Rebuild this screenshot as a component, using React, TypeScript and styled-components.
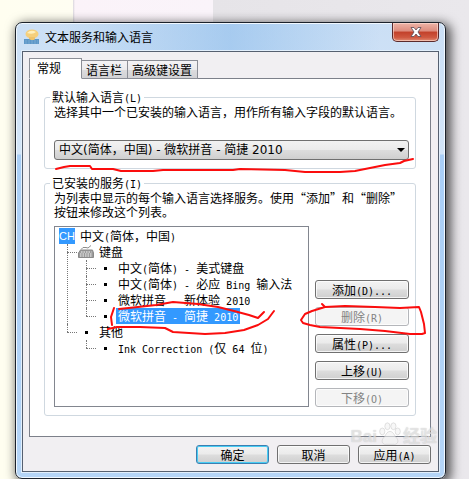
import React from "react";
import styled, { createGlobalStyle, css } from "styled-components";

const GlobalStyle = createGlobalStyle`
  * { box-sizing: border-box; }
  body {
    margin: 0;
    font: 12px/14px "Noto Sans CJK SC", sans-serif;
    color: #000;
  }
  button, select { font: inherit; color: inherit; margin: 0; }
`;

const Desktop = styled.div`
  position: relative;
  overflow: hidden;
  min-height: 100vh;
  padding: 22px 23px 0 15px;
  background: linear-gradient(90deg, #fffef0 0, #fffef2 73px, #d9d6dc 73px, #fbf3f9 75px, #faf4fa 213px, #e6e4e8 213px, #eae8ec 100%);
`;

const Dialog = styled.main`
  border: 1px solid #1c222b;
  border-radius: 7px;
  padding: 0 6px 6px;
  background:
    linear-gradient(90deg, transparent 0 10%, rgba(122, 178, 232, 0.45) 50%, transparent 85%) 0 0 / 100% 29px no-repeat,
    linear-gradient(#cbdff5 0, #d3e5f8 131px, #a9cef6 132px, #b5d5f7 100%);
  box-shadow: inset 0 0 0 1px #f1f8ff, 3px 3px 11px 2px rgba(0, 0, 0, 0.65);
`;

const TitleBar = styled.header`
  display: flex;
  align-items: flex-start;
  height: 28px;
`;

const Title = styled.h1`
  display: flex;
  align-items: center;
  gap: 5px;
  flex: 1;
  height: 28px;
  margin: 0;
  padding-left: 2px;
  font-size: 12px;
  font-weight: 400;
`;

const CloseButton = styled.button`
  display: grid;
  place-items: center;
  width: 47px;
  height: 19px;
  padding: 0;
  border: 1px solid #5a2a2c;
  border-top: 0;
  border-radius: 0 0 5px 5px;
  background: linear-gradient(#eeb4a8 0, #dd8b7c 45%, #c2402a 50%, #cf5840 80%, #e08c74 100%);
  box-shadow: inset 0 0 0 1px rgba(255, 225, 215, 0.6);
`;

const Client = styled.div`
  border: 1px solid #566070;
  padding: 6px 7px 7px 6px;
  background: #f1eff2;
  box-shadow: 0 0 0 1px #e2effc;
`;

const TabList = styled.div`
  display: flex;
  align-items: flex-end;
  position: relative;
  height: 21px;
  margin-bottom: -1px;
`;

const Tab = styled.button<{ $active?: boolean }>`
  height: 19px;
  padding: 0 5px 0 4px;
  border: 1px solid #8b8e96;
  border-left-width: 0;
  background: linear-gradient(#f4f3f5, #ebebed 50%, #dcdcde 51%, #d2d2d5);
  white-space: nowrap;
  ${(p) =>
    p.$active &&
    css`
      height: 21px;
      padding: 0 20px 2px 7px;
      border-left-width: 1px;
      border-bottom-color: #fff;
      background: #fff;
    `}
`;

const Pane = styled.section`
  display: flex;
  flex-direction: column;
  gap: 7px;
  border: 1px solid #7c808a;
  padding: 11px 14px 20px;
  background: #fff;
`;

const Group = styled.fieldset`
  min-width: 0;
  margin: 0;
  padding: 1px 6px 8px 9px;
  border: 1px solid #cfd8e0;
  border-radius: 3px;
`;

const Legend = styled.legend`
  height: 14px;
  margin-left: -4px;
  padding: 0 2px;
  line-height: 14px;
`;

const Description = styled.p`
  margin: 0;
  line-height: 14px;
`;

const SelectBox = styled.div`
  display: grid;
  align-items: center;
  margin-top: 21px;
  > * { grid-area: 1 / 1; }
  > svg { justify-self: end; margin-right: 4px; pointer-events: none; }
`;

const LanguageSelect = styled.select`
  appearance: none;
  width: 100%;
  height: 20px;
  padding: 0 20px 0 4px;
  border: 1px solid #707070;
  border-radius: 3px;
  background: linear-gradient(#f2f2f2, #ebebeb 48%, #dddddd 52%, #cfcfcf);
  font-family: "DejaVu Sans", "Noto Sans CJK SC", sans-serif;
`;

const Services = styled.div`
  display: flex;
  gap: 6px;
  margin-top: 7px;
`;

const TreeBox = styled.div`
  flex: 1;
  min-width: 0;
  padding: 1px 4px;
  border: 1px solid #82868f;
  background: #fff;
`;

const Branch = styled.ul`
  list-style: none;
  margin: 0;
  padding: 0;
`;

const Node = styled.li`
  position: relative;
  > ul { margin-left: 19px; }
  ul > &::before {
    content: "";
    position: absolute;
    left: -11px;
    top: 0;
    height: 100%;
    border-left: 1px dotted #777;
  }
  ul > &:last-child::before { height: 8px; }
  ul > &::after {
    content: "";
    position: absolute;
    left: -11px;
    top: 8px;
    width: 10px;
    border-top: 1px dotted #777;
  }
  ${Branch}[data-root] > &::before, ${Branch}[data-root] > &::after { display: none; }
`;

const NodeRow = styled.div`
  display: flex;
  align-items: center;
  gap: 3px;
  height: 16px;
  white-space: nowrap;
`;

const NodeIcon = styled.span`
  display: grid;
  place-items: center;
  flex: none;
  width: 16px;
  height: 16px;
`;

const LanguageBadge = styled(NodeIcon)`
  background: #3399ff;
  color: #fff;
  font: 11px/16px "Liberation Sans", sans-serif;
`;

const Bullet = styled.i`
  width: 3px;
  height: 3px;
  background: #000;
`;

const NodeLabel = styled.span<{ $selected?: boolean }>`
  height: 16px;
  padding: 0 2px;
  line-height: 16px;
  ${(p) => p.$selected && css`background: #3399ff; color: #fff;`}
`;

const Actions = styled.div`
  display: flex;
  flex-direction: column;
  gap: 8px;
  width: 94px;
  padding-top: 54px;
`;

const PushButton = styled.button<{ $primary?: boolean }>`
  height: 19px;
  padding: 0;
  border: 1px solid #707070;
  border-radius: 3px;
  background: linear-gradient(#f3f3f3, #ebebeb 48%, #dddddd 52%, #cfcfcf);
  box-shadow: inset 0 0 0 1px rgba(255, 255, 255, 0.75);
  line-height: 15px;
  white-space: nowrap;
  &:disabled {
    border-color: #b4b6ba;
    background: #f4f4f4;
    color: #838383;
  }
  ${(p) =>
    p.$primary &&
    css`
      border-color: #3c7fb1;
      box-shadow: inset 0 0 0 1px #48cdf4;
    `}
`;

const Footer = styled.footer`
  display: flex;
  justify-content: flex-end;
  gap: 8px;
  padding-top: 8px;
  ${PushButton} { width: 73px; }
`;

const Latin = styled.span`
  font-family: "DejaVu Sans Mono", monospace;
  font-size: 10px;
  line-height: 10px;
  white-space: pre;
`;

const Ink = styled.svg`
  position: absolute;
  left: 0;
  top: 0;
  pointer-events: none;
`;

const Watermark = styled.div`
  position: absolute;
  right: 32px;
  top: 422px;
  display: flex;
  align-items: flex-end;
  color: rgba(242, 242, 242, 0.6);
  text-shadow: 0 0 1px rgba(120, 120, 120, 0.4);
  font: 700 17px/30px "Liberation Sans", "Noto Sans CJK SC", sans-serif;
  pointer-events: none;
  svg { align-self: flex-start; stroke: rgba(190, 190, 190, 0.5); }
`;

/* Half-width runs are set in a fixed-pitch face, two cells to one ideograph. */
function Text({ children }: { children: string }) {
  return (
    <>
      {children.split(/([\x20-\x7e]+)/).map((run, i) => (i % 2 ? <Latin key={i}>{run}</Latin> : run))}
    </>
  );
}

function KeyboardIcon() {
  return (
    <svg width="16" height="14" viewBox="0 0 16 14" fill="none" aria-hidden="true">
      <path d="M3 4.500 5 2.500h3l2 .5 3-2.500" stroke="#8c8c8c" />
      <path d="M2.500 5h12l1 3v4.500H.5V8z" fill="#9a9a9a" stroke="#8a8a8a" />
      <path d="M3 7h10.500M2 9h12M2 11h12" stroke="#f4f4f4" strokeDasharray="1.500 1" />
    </svg>
  );
}

function TitleIcon() {
  return (
    <svg width="16" height="16" viewBox="0 0 16 16" aria-hidden="true">
      <ellipse cx="8" cy="5" rx="6.500" ry="4.500" fill="#f5cf7c" />
      <path d="M3 4q4-4 9-1-3 3-9 1z" fill="#fff0bd" />
      <path d="M5 8h6v3H5z" fill="#efc36a" />
      <path d="M0 10h5l2 1h3l1-1h4v5H0z" fill="#5d97c8" />
      <path d="M1 12h13M1 14h13" stroke="#7aaad2" strokeDasharray="2 1" />
    </svg>
  );
}

const keyboards = ["中文(简体) - 美式键盘", "中文(简体) - 必应 Bing 输入法", "微软拼音 - 新体验 2010", "微软拼音 - 简捷 2010"];
const actions = [
  { label: "添加(D)..." },
  { label: "删除(R)", disabled: true },
  { label: "属性(P)..." },
  { label: "上移(U)" },
  { label: "下移(O)", disabled: true },
];

function Leaf({ label, selected, children }: { label: string; selected?: boolean; children?: React.ReactNode }) {
  return (
    <Node>
      <NodeRow>
        <NodeIcon><Bullet /></NodeIcon>
        <NodeLabel $selected={selected}><Text>{label}</Text></NodeLabel>
      </NodeRow>
      {children}
    </Node>
  );
}

export default function App() {
  return (
    <Desktop>
      <GlobalStyle />
      <Dialog>
        <TitleBar>
          <Title><TitleIcon />文本服务和输入语言</Title>
          <CloseButton aria-label="关闭">
            <svg width="12" height="10" viewBox="0 0 12 10" aria-hidden="true">
              <path d="M1 .5h3L6 3l2-2.500h3L8 5l3 4.500H8L6 7 4 9.500H1L4 5z" fill="#fff" stroke="#5b4a55" strokeWidth=".8" />
            </svg>
          </CloseButton>
        </TitleBar>
        <Client>
          <TabList role="tablist">
            <Tab role="tab" aria-selected="true" $active>常规</Tab>
            <Tab role="tab" aria-selected="false">语言栏</Tab>
            <Tab role="tab" aria-selected="false">高级键设置</Tab>
          </TabList>
          <Pane role="tabpanel">
            <Group>
              <Legend><Text>默认输入语言(L)</Text></Legend>
              <Description id="default-language">选择其中一个已安装的输入语言，用作所有输入字段的默认语言。</Description>
              <SelectBox>
                <LanguageSelect aria-labelledby="default-language">
                  <option>中文(简体，中国) - 微软拼音 - 简捷 2010</option>
                </LanguageSelect>
                <svg width="8" height="4" viewBox="0 0 8 4" aria-hidden="true"><path d="M0 0h8L4 4z" /></svg>
              </SelectBox>
            </Group>
            <Group>
              <Legend><Text>已安装的服务(I)</Text></Legend>
              <Description>
                为列表中显示的每个输入语言选择服务。使用“添加”和“删除”<br />按钮来修改这个列表。
              </Description>
              <Services>
                <TreeBox>
                  <Branch data-root>
                    <Node>
                      <NodeRow>
                        <LanguageBadge>CH</LanguageBadge>
                        <NodeLabel><Text>中文(简体，中国)</Text></NodeLabel>
                      </NodeRow>
                      <Branch>
                        <Node>
                          <NodeRow>
                            <NodeIcon><KeyboardIcon /></NodeIcon>
                            <NodeLabel>键盘</NodeLabel>
                          </NodeRow>
                          <Branch>
                            {keyboards.map((label, i) => <Leaf key={label} label={label} selected={i === 3} />)}
                          </Branch>
                        </Node>
                        <Leaf label="其他">
                          <Branch><Leaf label="Ink Correction (仅 64 位)" /></Branch>
                        </Leaf>
                      </Branch>
                    </Node>
                  </Branch>
                </TreeBox>
                <Actions>
                  {actions.map((a) => (
                    <PushButton key={a.label} disabled={a.disabled}><Text>{a.label}</Text></PushButton>
                  ))}
                </Actions>
              </Services>
            </Group>
          </Pane>
          <Footer>
            <PushButton $primary>确定</PushButton>
            <PushButton>取消</PushButton>
            <PushButton><Text>应用(A)</Text></PushButton>
          </Footer>
        </Client>
      </Dialog>
      <Watermark aria-hidden="true">
        <span>Bai</span>
        <svg width="26" height="24" viewBox="0 0 26 28" fill="currentColor">
          <ellipse cx="4" cy="11" rx="3" ry="4" /><ellipse cx="10" cy="5" rx="3" ry="4" />
          <ellipse cx="17" cy="5" rx="3" ry="4" /><ellipse cx="22" cy="11" rx="3" ry="4" />
          <path d="M13 11c4 0 5 5 8 8 3 4 0 8-4 7h-8c-4 1-7-3-4-7 3-3 4-8 8-8z" />
        </svg>
        <span>经验</span>
      </Watermark>
      <Ink width="469" height="479" fill="none" stroke="#fb0d0d" strokeWidth="2" strokeLinejoin="round" strokeLinecap="round" aria-hidden="true">
        <path d="M56 169L64 167 70 166H90L92 169H113L121 171H153L163 170 233 170 240 169 285 170 305 172H340L355 171 370 168 385 165 400 163 404 161 413 159" />
        <path d="M114 308l-3 9 1 8M108 329l9-2 23 0 25 1 8 4 32 2 20-1 19-3 14-5 10-6 6-8M264 312l-6 6-9-3-15-4-16-4-20-3-25-2-17 3-18 2-19 2" />
        <path d="M322 304l3 3 20-1 30 1 25 1 19-1 2 5 3 12 1 9-3 1h-12l-25-3-25-2-20-1-20-1-10-2-7-2-2-3 4-6 7-3 13-4" />
      </Ink>
    </Desktop>
  );
}
